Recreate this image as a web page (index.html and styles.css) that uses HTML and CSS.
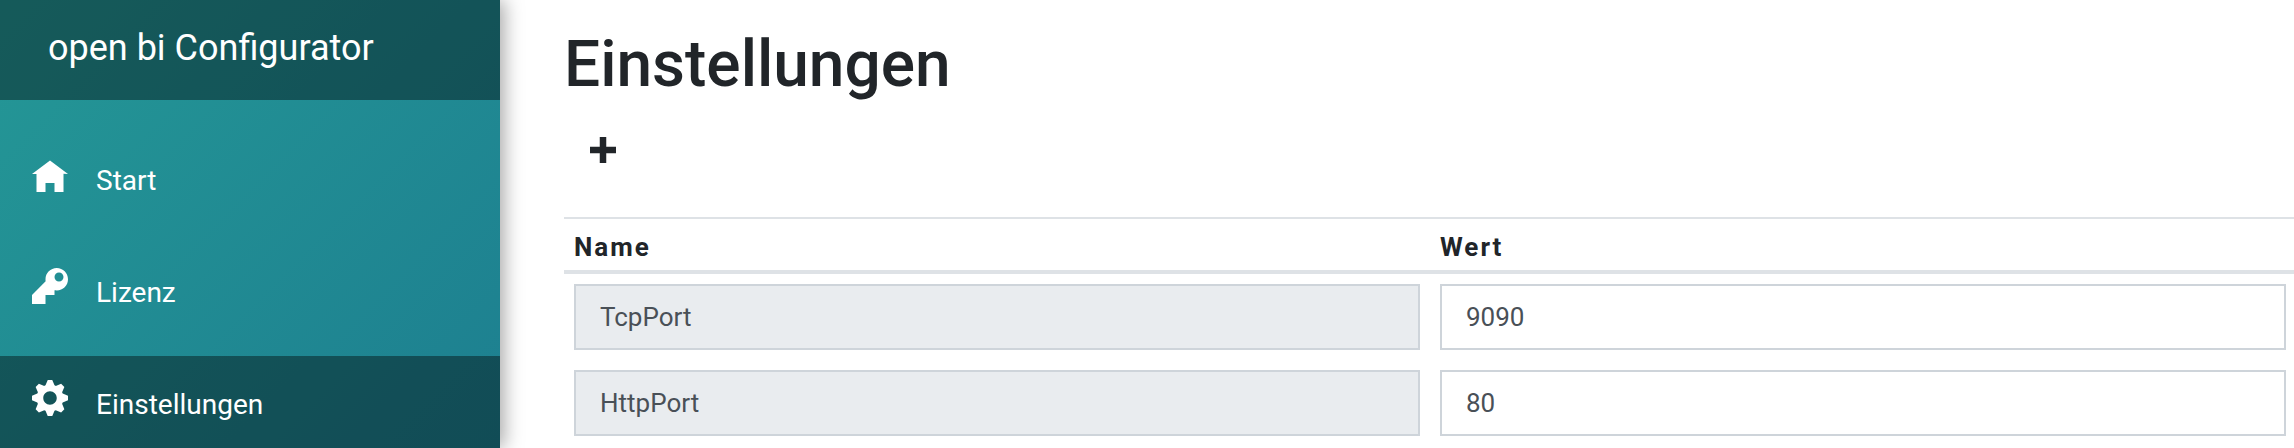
FILE: index.html
```html
<!DOCTYPE html>
<html lang="de">
<head>
    <meta charset="UTF-8">
    <title>open bi Configurator</title>
    <link rel="stylesheet" href="styles.css">
</head>
<body>
    <div class="app">
        <div class="sidebar">
            <div class="brand">open bi Configurator</div>
            <nav class="nav">
                <a class="nav-link">
                    <svg class="nav-icon" viewBox="0 -1 8 8"><path d="M4 0l-4 3h1v4h2v-2h2v2h2v-4.03l1 .03-4-3z"/></svg>
                    <span>Start</span>
                </a>
                <a class="nav-link">
                    <svg class="nav-icon" viewBox="0 0 8 8"><path d="M5.5 0c-1.38 0-2.5 1.12-2.5 2.5 0 .16 0 .32.03.47l-3.03 3.03v2h3v-2h2v-1l.03-.03c.15.03.31.03.47.03 1.38 0 2.5-1.12 2.5-2.5s-1.12-2.5-2.5-2.5zm.5 1c.55 0 1 .45 1 1s-.45 1-1 1-1-.45-1-1 .45-1 1-1z"/></svg>
                    <span>Lizenz</span>
                </a>
                <a class="nav-link active">
                    <svg class="nav-icon" viewBox="0 0 8 8"><path d="M3.5 0l-.5 1.19c-.1.03-.19.08-.28.13l-1.19-.5-.72.72.5 1.19c-.05.1-.09.18-.13.28l-1.19.5v1l1.19.5c.04.1.08.18.13.28l-.5 1.19.72.72 1.19-.5c.09.04.18.09.28.13l.5 1.19h1l.5-1.19c.09-.04.19-.08.28-.13l1.19.5.72-.72-.5-1.19c.04-.09.09-.19.13-.28l1.19-.5v-1l-1.19-.5c-.03-.09-.08-.19-.13-.28l.5-1.19-.72-.72-1.19.5c-.09-.04-.19-.09-.28-.13l-.5-1.19h-1zm.5 2.5c.83 0 1.5.67 1.5 1.5s-.67 1.5-1.5 1.5-1.5-.67-1.5-1.5.67-1.5 1.5-1.5z"/></svg>
                    <span>Einstellungen</span>
                </a>
            </nav>
        </div>

        <div class="main">
            <h1>Einstellungen</h1>
            <button class="btn-add">
                <svg class="add-icon" viewBox="0 0 8 8"><path d="M3 0v3h-3v2h3v3h2v-3h3v-2h-3v-3h-2z"/></svg>
            </button>
            <table class="table">
                <thead>
                    <tr>
                        <th class="col-name">Name</th>
                        <th>Wert</th>
                    </tr>
                </thead>
                <tbody>
                    <tr>
                        <td><input type="text" class="form-control" value="TcpPort" disabled></td>
                        <td><input type="text" class="form-control" value="9090"></td>
                    </tr>
                    <tr>
                        <td><input type="text" class="form-control" value="HttpPort" disabled></td>
                        <td><input type="text" class="form-control" value="80"></td>
                    </tr>
                </tbody>
            </table>
        </div>
    </div>
</body>
</html>
```

FILE: styles.css
```css
html, body {
    height: 100%;
    margin: 0;
    overflow: hidden;
}
body {
    font-family: Roboto, "Liberation Sans", sans-serif;
    background: #fff;
    color: #212529;
}
.app {
    display: flex;
    height: 100%;
}
.sidebar {
    flex: 0 0 500px;
    background: linear-gradient(135deg, #249796, #1d7f90);
    box-shadow: 4px 0 18px rgba(0, 0, 0, 0.35);
    position: relative;
    color: #fff;
}
.brand {
    height: 100px;
    line-height: 96px;
    padding-left: 48px;
    font-size: 36px;
    background: rgba(0, 0, 0, 0.4);
}
.nav {
    padding-top: 32px;
}
.nav-link {
    display: flex;
    align-items: center;
    box-sizing: border-box;
    height: 112px;
    padding: 0 0 16px 32px;
    font-size: 28px;
    color: #fff;
}
.nav-link.active {
    background: rgba(0, 0, 0, 0.4);
}
.nav-icon {
    width: 36px;
    height: 36px;
    margin: 0 28px 12px 0;
    fill: #fff;
}
.main {
    flex: 1;
    min-width: 0;
    padding: 25px 0 0 64px;
}
h1 {
    margin: 0;
    font-size: 64px;
    font-weight: 500;
    line-height: 80px;
}
.btn-add {
    display: block;
    width: 26px;
    height: 26px;
    margin: 32px 0 0 26px;
    padding: 0;
    border: 0;
    background: none;
}
.add-icon {
    display: block;
    width: 26px;
    height: 26px;
    fill: #212529;
}
.table {
    width: 100%;
    margin-top: 54px;
    border-collapse: separate;
    border-spacing: 0;
    table-layout: fixed;
}
.table th {
    height: 47px;
    padding: 4px 10px 0;
    text-align: left;
    font-size: 26px;
    font-weight: 700;
    letter-spacing: 2px;
    border-top: 2px solid #dee2e6;
    border-bottom: 4px solid #dee2e6;
}
.table .col-name {
    width: 846px;
}
.table td {
    padding: 10px 8px 10px 10px;
}
.table td:first-child {
    padding-right: 10px;
}
.form-control {
    display: block;
    box-sizing: border-box;
    width: 100%;
    height: 66px;
    padding: 0 24px;
    font-family: inherit;
    font-size: 26px;
    color: #495057;
    background: #fff;
    border: 2px solid #ced4da;
    border-radius: 0;
}
.form-control:disabled {
    background: #e9ecef;
    opacity: 1;
}
```
